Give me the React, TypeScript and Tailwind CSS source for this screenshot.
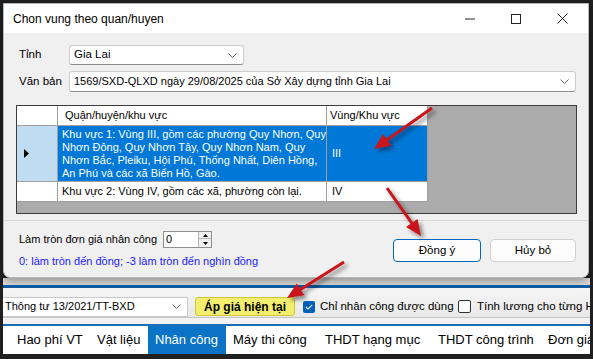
import React from "react";

const Chevron = () => (
  <svg width="9" height="5" viewBox="0 0 9 5">
    <path d="M0.5 0.5 L4.5 4.5 L8.5 0.5" fill="none" stroke="#6a6a6a" strokeWidth="1" />
  </svg>
);

type ArrowProps = { x1: number; y1: number; x2: number; y2: number };

const Arrow = ({ x1, y1, x2, y2 }: ArrowProps) => {
  const dx = x2 - x1;
  const dy = y2 - y1;
  const len = Math.hypot(dx, dy);
  const ux = dx / len;
  const uy = dy / len;
  const hl = 16;
  const hw = 7;
  const bx = x2 - ux * hl;
  const by = y2 - uy * hl;
  const pts = `${x2},${y2} ${bx - uy * hw},${by + ux * hw} ${bx + uy * hw},${by - ux * hw}`;
  return (
    <g filter="url(#arrowShadow)">
      <line x1={x1} y1={y1} x2={bx + ux * 2} y2={by + uy * 2} stroke="#c8141a" strokeWidth="3" />
      <polygon points={pts} fill="#c8141a" />
    </g>
  );
};

const tabs = [
  { label: "Hao phí VT", w: "w-[80px]" },
  { label: "Vật liệu", w: "w-[58px]" },
  { label: "Nhân công", w: "w-[78px]", active: true },
  { label: "Máy thi công", w: "w-[92px]" },
  { label: "THDT hạng mục", w: "w-[113px]" },
  { label: "THDT công trình", w: "w-[110px]" },
  { label: "Đơn giá", w: "w-[80px]" },
];

export default function App() {
  return (
    <div className="relative w-[593px] h-[359px] overflow-hidden bg-[#202020] font-['Liberation_Sans',Arial,sans-serif] text-black">
      <div className="pt-[3px] pl-[3px] relative z-10">
        {/* dialog */}
        <div className="w-[586px] h-[275px] flex flex-col border border-[#b9b9b9] rounded-b-[7px] bg-[#f0f0f0] shadow-[0_3px_8px_rgba(0,0,0,0.35)] overflow-hidden">
          {/* title bar */}
          <div className="h-[29px] bg-white flex items-center shrink-0">
            <span className="pl-[9px] text-[12px] leading-none">Chon vung theo quan/huyen</span>
            <div className="ml-auto flex items-center">
              <div className="w-[46px] h-[29px] flex items-center justify-center">
                <svg width="11" height="2" viewBox="0 0 11 2">
                  <line x1="0" y1="1" x2="10" y2="1" stroke="#222" strokeWidth="1" />
                </svg>
              </div>
              <div className="w-[46px] h-[29px] flex items-center justify-center">
                <svg width="10" height="10" viewBox="0 0 10 10">
                  <rect x="0.5" y="0.5" width="9" height="9" fill="none" stroke="#222" strokeWidth="1" />
                </svg>
              </div>
              <div className="w-[46px] h-[29px] flex items-center justify-center mr-[3px]">
                <svg width="11" height="11" viewBox="0 0 11 11">
                  <path d="M0.5 0.5 L10.5 10.5 M10.5 0.5 L0.5 10.5" stroke="#222" strokeWidth="1" />
                </svg>
              </div>
            </div>
          </div>

          {/* Tinh */}
          <div className="flex items-center mt-[12px] pl-[15px] h-[20px]">
            <span className="w-[50px] text-[11.5px]">Tỉnh</span>
            <div className="w-[175px] h-[20px] bg-white border border-[#cdcdcd] border-b-[#8c8c8c] rounded-[3px] flex items-center pl-[4px] pr-[6px] text-[11.5px]">
              <span>Gia Lai</span>
              <span className="ml-auto flex"><Chevron /></span>
            </div>
          </div>

          {/* Van ban */}
          <div className="flex items-center mt-[6px] pl-[15px] h-[21px]">
            <span className="w-[50px] text-[11.5px]">Văn bản</span>
            <div className="w-[507px] h-[21px] bg-white border border-[#cdcdcd] border-b-[#8c8c8c] rounded-[3px] flex items-center pl-[4px] pr-[6px] text-[11px]">
              <span>1569/SXD-QLXD ngày 29/08/2025 của Sở Xây dựng tỉnh Gia Lai</span>
              <span className="ml-auto flex"><Chevron /></span>
            </div>
          </div>

          {/* grid */}
          <div className="ml-[12px] mt-[13px] w-[561px] h-[109px] border border-[#3c3c3c] bg-[#ababab] text-[11px] leading-[13px]">
            <div className="flex h-[20px] w-[411px] bg-white border-b border-[#a0a0a0]">
              <div className="w-[41px] border-r border-[#a0a0a0]" />
              <div className="w-[269px] border-r border-[#a0a0a0] pl-[7px] flex items-center">Quận/huyện/khu vực</div>
              <div className="w-[101px] border-r border-[#a0a0a0] pl-[3px] flex items-center">Vùng/Khu vực</div>
            </div>
            <div className="flex h-[56px] w-[411px] border-b border-[#a0a0a0]">
              <div className="w-[41px] bg-[#bfdcf3] border-r border-[#a0a0a0] flex items-center pl-[7px]">
                <svg width="5" height="9" viewBox="0 0 5 9">
                  <polygon points="0,0 5,4.5 0,9" fill="#000" />
                </svg>
              </div>
              <div className="w-[269px] bg-[#0078d7] text-white border-r border-[#a0a0a0] pl-[4px] flex flex-col justify-center">
                <span>Khu vực 1: Vùng III, gồm các phường Quy Nhơn, Quy</span>
                <span>Nhơn Đông, Quy Nhơn Tây, Quy Nhơn Nam, Quy</span>
                <span>Nhơn Bắc, Pleiku, Hội Phú, Thống Nhất, Diên Hồng,</span>
                <span>An Phú và các xã Biển Hồ, Gào.</span>
              </div>
              <div className="w-[101px] bg-[#0078d7] text-white border-r border-[#a0a0a0] pl-[5px] flex items-center">III</div>
            </div>
            <div className="flex h-[20px] w-[411px] bg-white border-b border-[#a0a0a0]">
              <div className="w-[41px] border-r border-[#a0a0a0]" />
              <div className="w-[269px] border-r border-[#a0a0a0] pl-[4px] flex items-center">Khu vực 2: Vùng IV, gồm các xã, phường còn lại.</div>
              <div className="w-[101px] border-r border-[#a0a0a0] pl-[5px] flex items-center">IV</div>
            </div>
          </div>

          <div className="mt-[6px] h-[1px] bg-[#d9d9d9]" />

          {/* lower panel */}
          <div className="flex flex-1">
            <div className="pl-[15px] pt-[10px] flex flex-col">
              <div className="flex items-center h-[17px]">
                <span className="w-[144px] text-[11px]">Làm tròn đơn giá nhân công</span>
                <div className="w-[49px] h-[17px] bg-white border border-[#8f8f8f] flex">
                  <span className="flex-1 pl-[2px] text-[11px] leading-[15px]">0</span>
                  <div className="w-[13px] flex flex-col border-l border-[#b5b5b5] bg-[#f0f0f0]">
                    <div className="h-[7px] flex items-center justify-center border-b border-[#b5b5b5]">
                      <svg width="5" height="3" viewBox="0 0 5 3"><polygon points="0,3 2.5,0 5,3" fill="#000" /></svg>
                    </div>
                    <div className="flex-1 flex items-center justify-center">
                      <svg width="5" height="3" viewBox="0 0 5 3"><polygon points="0,0 2.5,3 5,0" fill="#000" /></svg>
                    </div>
                  </div>
                </div>
              </div>
              <span className="mt-[6px] text-[11px] leading-[14px] text-[#1a1aff]">
                0: làm tròn đến đồng; -3 làm tròn đến nghìn đồng
              </span>
            </div>
            <div className="ml-auto mr-[12px] mt-[18px] flex gap-[9px]">
              <div className="w-[88px] h-[23px] bg-[#fdfdfd] border border-[#0067c0] rounded-[4px] flex items-center justify-center text-[11.5px]">
                Đồng ý
              </div>
              <div className="w-[86px] h-[23px] bg-[#fdfdfd] border border-[#d0d0d0] rounded-[4px] flex items-center justify-center text-[11.5px]">
                Hủy bỏ
              </div>
            </div>
          </div>
        </div>
      </div>

      {/* main app behind */}
      <div className="ml-[3px] w-[587px] flex flex-col">
        <div className="h-[7px] bg-[#dcdcdc]" />
        <div className="h-[3px] bg-[#0d5ea6]" />
        <div className="h-[29px] flex items-center pt-[8px] bg-gradient-to-b from-[#f6f6f6] to-[#e8e8e8] overflow-hidden">
          <div className="shrink-0 w-[185px] h-[20px] bg-white border border-l-0 border-[#c8c8c8] flex items-center pl-[2px] pr-[6px] text-[11px]">
            <span>Thông tư 13/2021/TT-BXD</span>
            <span className="ml-auto flex"><Chevron /></span>
          </div>
          <div className="shrink-0 ml-[7px] w-[100px] h-[19px] bg-[#f3ee6e] border border-[#cfc63c] rounded-[3px] flex items-center justify-center text-[12px] font-bold">
            Áp giá hiện tại
          </div>
          <div className="shrink-0 ml-[8px] w-[12px] h-[12px] rounded-[2px] bg-[#005fb8] flex items-center justify-center">
            <svg width="8" height="6" viewBox="0 0 8 6">
              <path d="M0.8 3 L3 5 L7.2 0.8" fill="none" stroke="#fff" strokeWidth="1.1" />
            </svg>
          </div>
          <span className="shrink-0 ml-[5px] w-[138px] text-[11.5px] whitespace-nowrap">Chỉ nhân công được dùng</span>
          <div className="shrink-0 w-[13px] h-[13px] rounded-[2px] border border-[#333] bg-white" />
          <span className="shrink-0 ml-[6px] text-[11.5px] whitespace-nowrap">Tính lương cho từng HM</span>
        </div>
        <div className="h-[1px] bg-[#c4c4c4]" />
        <div className="h-[6px] bg-[#f2f2f2]" />
        <div className="h-[2px] bg-[#1c6fb5]" />
        <div className="h-[28px] bg-white flex pl-[7px] text-[13px] whitespace-nowrap overflow-hidden">
          {tabs.map((t) => (
            <div
              key={t.label}
              className={`${t.w} shrink-0 pl-[7px] flex items-center ${t.active ? "bg-[#0a73c6] text-white" : ""}`}
            >
              {t.label}
            </div>
          ))}
        </div>
      </div>

      {/* annotation arrows */}
      <svg className="absolute inset-0 z-20 pointer-events-none" width="593" height="359">
        <defs>
          <filter id="arrowShadow" x="-20%" y="-20%" width="160%" height="160%">
            <feDropShadow dx="3" dy="3" stdDeviation="2" floodColor="#000" floodOpacity="0.45" />
          </filter>
        </defs>
        <Arrow x1={432} y1={108} x2={374} y2={149} />
        <Arrow x1={387} y1={188} x2={421} y2={236} />
        <Arrow x1={344} y1={262} x2={287} y2={298} />
      </svg>
    </div>
  );
}
